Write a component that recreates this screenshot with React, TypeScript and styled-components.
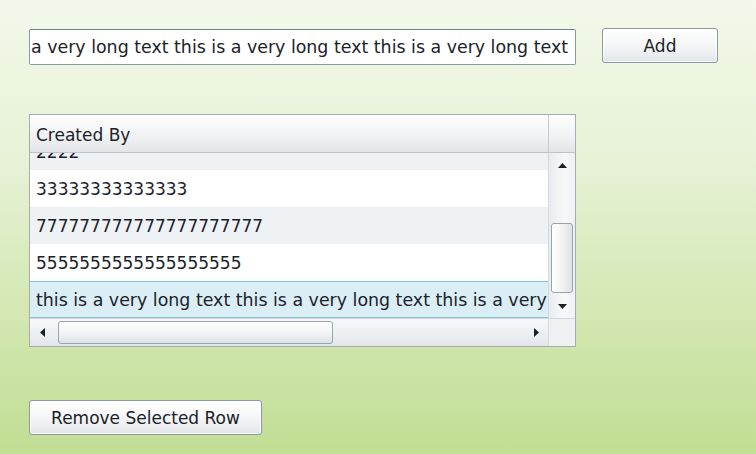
import styled, { createGlobalStyle } from 'styled-components';

const GlobalStyle = createGlobalStyle`
  html, body {
    margin: 0;
    padding: 0;
  }
  body {
    font-family: "DejaVu Sans", Verdana, sans-serif;
    color: #1b222a;
  }
`;

const rows = [
  { id: 1, text: '2222' },
  { id: 2, text: '33333333333333' },
  { id: 3, text: '777777777777777777777' },
  { id: 4, text: '5555555555555555555' },
  { id: 5, text: 'this is a very long text this is a very long text this is a very long text' },
];

const selectedId = 5;

const StyledPage = styled.div`
  box-sizing: border-box;
  width: 756px;
  height: 454px;
  padding: 28px 0 0 29px;
  display: flex;
  flex-direction: column;
  align-items: flex-start;
  background: linear-gradient(180deg, #f2f8ea 0%, #e7f2d7 35%, #d5e9b6 65%, #c1dd94 100%);
  overflow: hidden;
`;

const StyledTopBar = styled.div`
  display: flex;
  align-items: flex-start;
  gap: 26px;
`;

const StyledTextBox = styled.div`
  box-sizing: border-box;
  margin-top: 1px;
  width: 547px;
  height: 36px;
  padding: 0 7px 1px 2px;
  display: flex;
  align-items: center;
  justify-content: flex-end;
  overflow: hidden;
  white-space: nowrap;
  font-size: 17.4px;
  background: #fff;
  border: 1px solid #8a99a6;
  border-top-color: #6f7f8c;
  border-radius: 2px;
`;

const StyledButton = styled.button<{ $width: number }>`
  box-sizing: border-box;
  width: ${(p) => p.$width}px;
  height: 35px;
  padding: 0;
  font-family: "DejaVu Sans", Verdana, sans-serif;
  font-size: 17px;
  color: #1b222a;
  background: linear-gradient(180deg, #ffffff 0%, #f6f7f8 45%, #e3e6e9 100%);
  border: 1px solid #8c99a4;
  border-radius: 3px;
  box-shadow: inset 0 0 0 1px rgba(255, 255, 255, 0.8);
`;

const StyledGrid = styled.div`
  box-sizing: border-box;
  margin-top: 49px;
  width: 547px;
  height: 233px;
  display: flex;
  flex-direction: column;
  background: #fff;
  border: 1px solid #a3adb5;
`;

const StyledHeader = styled.div`
  display: grid;
  grid-template-columns: 1fr 27px;
  height: 38px;
  box-sizing: border-box;
  border-bottom: 1px solid #bcc3c9;
  background: linear-gradient(180deg, #fdfdfd 0%, #f4f5f6 45%, #e2e5e8 100%);
`;

const StyledHeaderCell = styled.div`
  display: flex;
  align-items: center;
  padding: 2px 0 0 6px;
  font-size: 17px;
`;

const StyledHeaderCorner = styled.div`
  border-left: 1px solid #c4cacf;
`;

const StyledBody = styled.div`
  display: grid;
  grid-template-columns: 1fr 27px;
  height: 165px;
`;

const StyledRowViewport = styled.div`
  overflow: hidden;
`;

const StyledRowList = styled.div`
  margin-top: -20px;
`;

const StyledRow = styled.div<{ $alt: boolean; $selected: boolean }>`
  box-sizing: border-box;
  height: 37px;
  padding: 1px 0 0 6px;
  display: flex;
  align-items: center;
  white-space: nowrap;
  font-size: ${(p) => (p.$selected ? 17.4 : 17)}px;
  background: ${(p) => (p.$selected ? '#dbeef6' : p.$alt ? '#eef2f5' : '#ffffff')};
  border: 1px solid ${(p) => (p.$selected ? '#86c3d7' : 'transparent')};
  border-left-width: 0;
  border-right-width: 0;
`;

const StyledVScroll = styled.div`
  display: flex;
  flex-direction: column;
  border-left: 1px solid #d3d8dc;
  background: linear-gradient(90deg, #e9ecef 0%, #f7f8f9 60%, #eef0f2 100%);
`;

const StyledArrowButton = styled.div<{ $size: number }>`
  flex: 0 0 ${(p) => p.$size}px;
  display: flex;
  align-items: center;
  justify-content: center;
`;

const StyledVTrack = styled.div`
  flex: 1;
  display: flex;
  justify-content: center;
`;

const StyledVThumb = styled.div`
  box-sizing: border-box;
  margin-top: 46px;
  width: 22px;
  height: 70px;
  border: 1px solid #97a3ad;
  border-radius: 3px;
  background: linear-gradient(90deg, #ffffff 0%, #f2f3f4 50%, #dde1e4 100%);
`;

const StyledHScroll = styled.div`
  display: grid;
  grid-template-columns: 1fr 27px;
  flex: 1;
  border-top: 1px solid #d3d8dc;
`;

const StyledHBar = styled.div`
  display: flex;
  align-items: stretch;
  background: linear-gradient(180deg, #f6f7f8 0%, #eceff1 60%, #e3e6e9 100%);
`;

const StyledHTrack = styled.div`
  flex: 1;
  display: flex;
  align-items: center;
`;

const StyledHThumb = styled.div`
  box-sizing: border-box;
  margin-left: 4px;
  width: 275px;
  height: 23px;
  border: 1px solid #97a3ad;
  border-radius: 3px;
  background: linear-gradient(180deg, #ffffff 0%, #f3f4f5 50%, #dee2e5 100%);
`;

const StyledCorner = styled.div`
  border-left: 1px solid #d3d8dc;
  background: #eef0f2;
`;

const StyledFooter = styled.div`
  margin-top: 53px;
`;

type ArrowDir = 'up' | 'down' | 'left' | 'right';

const arrowPoints: Record<ArrowDir, string> = {
  up: '0,5 9,5 4.5,0',
  down: '0,0 9,0 4.5,5',
  left: '5,0 5,9 0,4.5',
  right: '0,0 0,9 5,4.5',
};

function Arrow({ dir }: { dir: ArrowDir }) {
  const vertical = dir === 'up' || dir === 'down';
  return (
    <svg width={vertical ? 9 : 5} height={vertical ? 5 : 9} viewBox={vertical ? '0 0 9 5' : '0 0 5 9'}>
      <polygon points={arrowPoints[dir]} fill="#1a1f24" />
    </svg>
  );
}

export default function App() {
  return (
    <>
      <GlobalStyle />
      <StyledPage>
        <StyledTopBar>
          <StyledTextBox>
            this is a very long text this is a very long text this is a very long text
          </StyledTextBox>
          <StyledButton $width={116}>Add</StyledButton>
        </StyledTopBar>

        <StyledGrid>
          <StyledHeader>
            <StyledHeaderCell>Created By</StyledHeaderCell>
            <StyledHeaderCorner />
          </StyledHeader>
          <StyledBody>
            <StyledRowViewport>
              <StyledRowList>
                {rows.map((row, i) => (
                  <StyledRow key={row.id} $alt={i % 2 === 0} $selected={row.id === selectedId}>
                    {row.text}
                  </StyledRow>
                ))}
              </StyledRowList>
            </StyledRowViewport>
            <StyledVScroll>
              <StyledArrowButton $size={24}>
                <Arrow dir="up" />
              </StyledArrowButton>
              <StyledVTrack>
                <StyledVThumb />
              </StyledVTrack>
              <StyledArrowButton $size={24}>
                <Arrow dir="down" />
              </StyledArrowButton>
            </StyledVScroll>
          </StyledBody>
          <StyledHScroll>
            <StyledHBar>
              <StyledArrowButton $size={24}>
                <Arrow dir="left" />
              </StyledArrowButton>
              <StyledHTrack>
                <StyledHThumb />
              </StyledHTrack>
              <StyledArrowButton $size={24}>
                <Arrow dir="right" />
              </StyledArrowButton>
            </StyledHBar>
            <StyledCorner />
          </StyledHScroll>
        </StyledGrid>

        <StyledFooter>
          <StyledButton $width={233}>Remove Selected Row</StyledButton>
        </StyledFooter>
      </StyledPage>
    </>
  );
}
